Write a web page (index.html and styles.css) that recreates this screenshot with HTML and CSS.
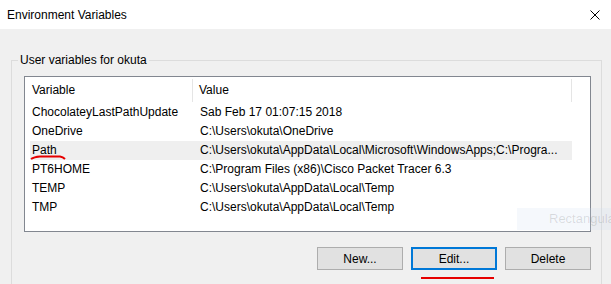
FILE: index.html
```html
<!DOCTYPE html>
<html lang="en">
<head>
    <meta charset="UTF-8">
    <title>Environment Variables</title>
    <link rel="stylesheet" href="styles.css">
</head>
<body>
    <div class="window">
        <div class="titlebar">
            <span class="title">Environment Variables</span>
            <svg class="close" width="10" height="10" viewBox="0 0 10 10">
                <path d="M0.5 0.5 L9.5 9.5 M9.5 0.5 L0.5 9.5" stroke="#000" stroke-width="1" fill="none"/>
            </svg>
        </div>
        <div class="dialog">
            <fieldset class="group">
                <legend>User variables for okuta</legend>
                <div class="listview">
                    <div class="lv-header">
                        <div class="lv-head col-name">Variable</div>
                        <div class="lv-head col-value">Value</div>
                    </div>
                    <div class="lv-row">
                        <div class="cell-name">ChocolateyLastPathUpdate</div>
                        <div class="cell-value">Sab Feb 17 01:07:15 2018</div>
                    </div>
                    <div class="lv-row">
                        <div class="cell-name">OneDrive</div>
                        <div class="cell-value">C:\Users\okuta\OneDrive</div>
                    </div>
                    <div class="lv-row selected">
                        <div class="cell-name">Path</div>
                        <div class="cell-value">C:\Users\okuta\AppData\Local\Microsoft\WindowsApps;C:\Progra...</div>
                    </div>
                    <div class="lv-row">
                        <div class="cell-name">PT6HOME</div>
                        <div class="cell-value">C:\Program Files (x86)\Cisco Packet Tracer 6.3</div>
                    </div>
                    <div class="lv-row">
                        <div class="cell-name">TEMP</div>
                        <div class="cell-value">C:\Users\okuta\AppData\Local\Temp</div>
                    </div>
                    <div class="lv-row">
                        <div class="cell-name">TMP</div>
                        <div class="cell-value">C:\Users\okuta\AppData\Local\Temp</div>
                    </div>
                </div>
                <div class="buttons">
                    <button class="btn">New...</button>
                    <button class="btn btn-default">Edit...</button>
                    <button class="btn">Delete</button>
                </div>
            </fieldset>
        </div>

        <!-- annotations drawn over the screenshot -->
        <svg class="mark-path" width="36" height="6" viewBox="0 0 36 6">
            <path d="M1 4 Q4 2 10 1.5 L30 1.5 Q33 2 35 4" stroke="#e60000" stroke-width="2" fill="none"/>
        </svg>
        <div class="mark-edit"></div>
        <div class="tooltip">Rectangular</div>
    </div>
</body>
</html>
```

FILE: styles.css
```css
body {
    margin: 0;
    font-family: "Liberation Sans", Arial, sans-serif;
    font-size: 12px;
    color: #000;
}
.window {
    position: relative;
    width: 611px;
    height: 284px;
    overflow: hidden;
    background-color: #f0f0f0;
}
.titlebar {
    height: 29px;
    background-color: #fff;
    display: flex;
    align-items: center;
    justify-content: space-between;
    padding: 0 11px 0 7px;
}
.dialog {
    padding: 23px 9px 0 11px;
}
.group {
    margin: 0;
    padding: 0;
    border: 1px solid #dcdcdc;
    height: 300px;
}
.group legend {
    margin-left: 6px;
    padding: 0 2px;
    line-height: 16px;
}
.listview {
    margin: 8px 10px 0 12px;
    height: 154px;
    border: 1px solid #828790;
    background-color: #fff;
}
.lv-header {
    display: flex;
    height: 26px;
    padding-top: 2px;
    box-sizing: border-box;
}
.lv-head {
    height: 23px;
    line-height: 23px;
    border-right: 1px solid #e5e5e5;
}
.lv-head.col-name {
    width: 160px;
    padding-left: 7px;
}
.lv-head.col-value {
    width: 372px;
    padding-left: 6px;
}
.lv-row {
    display: grid;
    grid-template-columns: 163px 379px;
    margin-left: 5px;
    width: 542px;
    height: 19px;
    line-height: 19px;
    white-space: nowrap;
}
.lv-row.selected {
    background-color: #efefef;
}
.cell-name {
    padding-left: 2px;
}
.cell-value {
    padding-left: 7px;
    overflow: hidden;
}
.buttons {
    display: flex;
    justify-content: flex-end;
    gap: 8px;
    margin: 15px 10px 0 0;
}
.btn {
    width: 86px;
    height: 23px;
    padding: 0;
    border: 1px solid #adadad;
    background-color: #e1e1e1;
    font-family: inherit;
    font-size: 12px;
    color: #000;
}
.btn-default {
    border: 2px solid #0078d7;
}
.mark-path {
    position: absolute;
    left: 30px;
    top: 155px;
}
.mark-edit {
    position: absolute;
    left: 421px;
    top: 277px;
    width: 73px;
    height: 2px;
    background-color: #e60000;
}
.tooltip {
    position: absolute;
    left: 517px;
    top: 208px;
    width: 120px;
    height: 22px;
    line-height: 22px;
    padding-left: 32px;
    box-sizing: border-box;
    background-color: rgba(205, 222, 240, 0.2);
    color: rgba(0, 0, 0, 0.12);
    font-size: 13px;
}
```
